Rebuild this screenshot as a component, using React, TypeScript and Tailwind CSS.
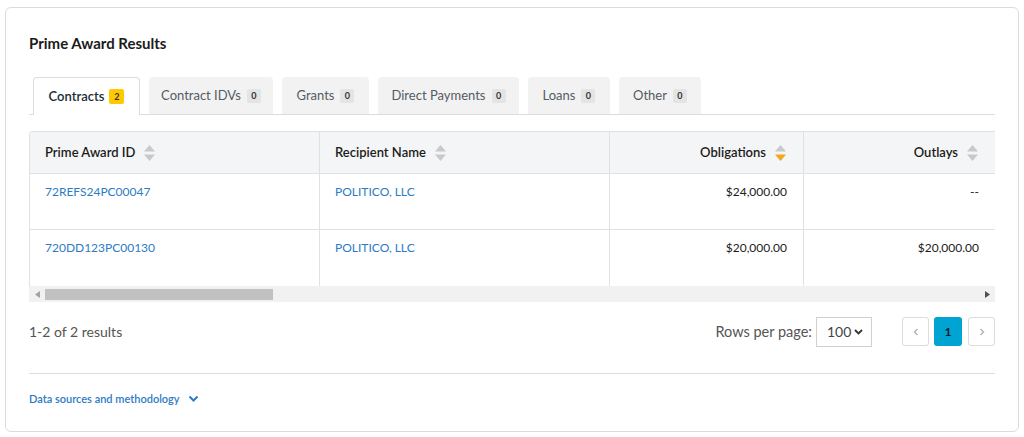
import React from 'react';

const font = { fontFamily: '"Source Sans Pro", Lato, "Liberation Sans", sans-serif' };

const tabs = [
  { label: 'Contracts', count: 2, active: true, w: 'w-[107px]' },
  { label: 'Contract IDVs', count: 0, w: 'w-[124px]' },
  { label: 'Grants', count: 0, w: 'w-[87px]' },
  { label: 'Direct Payments', count: 0, w: 'w-[141px]' },
  { label: 'Loans', count: 0, w: 'w-[82px]' },
  { label: 'Other', count: 0, w: 'w-[82px]' },
];

const rows = [
  { id: '72REFS24PC00047', name: 'POLITICO, LLC', obligations: '$24,000.00', outlays: '--' },
  { id: '720DD123PC00130', name: 'POLITICO, LLC', obligations: '$20,000.00', outlays: '$20,000.00' },
];

const SortIcon = ({ active }: { active?: boolean }) => (
  <svg width="13" height="20" viewBox="0 0 13 20" className="shrink-0">
    <path d="M6.5 2 L12 8.5 H1 Z" fill="#c9c9c9" />
    <path d="M6.5 18 L12 11.5 H1 Z" fill={active ? '#f2a81d' : '#c9c9c9'} />
  </svg>
);

export default function App() {
  return (
    <div className="bg-white px-[5px] pt-[7px] h-[437px]" style={font}>
      <div className="border border-[#dcdcdc] rounded-[6px] px-[23px] pt-[25px] h-[425px]">
        <h2 className="text-[15px] leading-[20px] font-bold text-[#1b1b1b]">Prime Award Results</h2>

        {/* tabs */}
        <div className="mt-[24px] flex gap-[9px] pl-[4px] border-b border-[#dcdcdc] h-[38px]">
          {tabs.map((t) =>
            t.active ? (
              <div
                key={t.label}
                className={`${t.w} h-[38px] flex items-center justify-center gap-[5px] bg-white border border-b-0 border-[#dcdcdc] rounded-t-[4px] text-[13px] font-semibold text-[#1b2b3b]`}
              >
                {t.label}
                <span className="w-[15px] h-[15px] rounded-[2px] bg-[#ffc800] text-[9px] font-bold text-[#333] flex items-center justify-center">
                  {t.count}
                </span>
              </div>
            ) : (
              <div
                key={t.label}
                className={`${t.w} h-[37px] flex items-center justify-center gap-[6px] bg-[#f2f2f2] rounded-t-[4px] text-[13px] text-[#555b63]`}
              >
                {t.label}
                <span className="w-[14px] h-[14px] rounded-[2px] bg-[#e3e4e5] text-[9px] font-bold text-[#333] flex items-center justify-center">
                  {t.count}
                </span>
              </div>
            )
          )}
        </div>

        {/* table */}
        <div className="mt-[16px] border-l border-t border-[#dfe1e2] rounded-tl-[4px] overflow-hidden">
          <div className="flex h-[42px] bg-[#f4f5f6] border-b border-[#dfe1e2] text-[13px] font-semibold text-[#1b1b1b]">
            <div className="w-[290px] shrink-0 border-r border-[#dfe1e2] flex items-center gap-[8px] pl-[15px]">
              Prime Award ID <SortIcon />
            </div>
            <div className="w-[290px] shrink-0 border-r border-[#dfe1e2] flex items-center gap-[8px] pl-[15px]">
              Recipient Name <SortIcon />
            </div>
            <div className="w-[194px] shrink-0 border-r border-[#dfe1e2] flex items-center justify-end gap-[8px] pr-[16px]">
              Obligations <SortIcon active />
            </div>
            <div className="flex-1 flex items-center justify-end gap-[8px] pr-[16px]">
              Outlays <SortIcon />
            </div>
          </div>
          {rows.map((r) => (
            <div key={r.id} className="flex h-[56px] border-b border-[#dfe1e2] text-[12px] last:border-b-0">
              <div className="w-[290px] shrink-0 border-r border-[#dfe1e2] pl-[15px] pt-[9px] text-[#2e7bc4]">{r.id}</div>
              <div className="w-[290px] shrink-0 border-r border-[#dfe1e2] pl-[15px] pt-[9px] text-[#2e7bc4]">{r.name}</div>
              <div className="w-[194px] shrink-0 border-r border-[#dfe1e2] pr-[16px] pt-[9px] text-right text-[#1b1b1b]">
                {r.obligations}
              </div>
              <div className="flex-1 pr-[16px] pt-[9px] text-right text-[#1b1b1b]">{r.outlays}</div>
            </div>
          ))}
        </div>

        {/* fake scrollbar */}
        <div className="h-[16px] bg-[#f1f1f1] flex items-center">
          <div className="w-[16px] flex justify-center">
            <svg width="5" height="7" viewBox="0 0 5 7">
              <path d="M5 0 L0 3.5 L5 7 Z" fill="#a3a3a3" />
            </svg>
          </div>
          <div className="w-[228px] h-[11px] bg-[#c1c1c1]" />
          <div className="flex-1" />
          <div className="w-[16px] flex justify-center">
            <svg width="5" height="7" viewBox="0 0 5 7">
              <path d="M0 0 L5 3.5 L0 7 Z" fill="#505050" />
            </svg>
          </div>
        </div>

        {/* footer */}
        <div className="flex items-center justify-between mt-[15px] h-[29px]" style={{ fontFamily: 'Lato, sans-serif' }}>
          <div className="text-[14px] text-[#555]">1-2 of 2 results</div>
          <div className="flex items-center">
            <span className="text-[14.5px] text-[#555] mr-[4px]">Rows per page:</span>
            <div className="w-[56px] h-[30px] border border-[#d0d0d0] flex items-center justify-between pl-[10px] pr-[8px] text-[14px] text-[#444]">
              100
              <svg width="9" height="6" viewBox="0 0 9 6">
                <path d="M1 1 L4.5 4.5 L8 1" stroke="#333" strokeWidth="1.8" fill="none" />
              </svg>
            </div>
            <div className="flex items-center ml-[30px] gap-[5px]">
              <div className="w-[27px] h-[29px] border border-[#dcdcdc] rounded-[3px] flex items-center justify-center">
                <svg width="6" height="8" viewBox="0 0 6 8">
                  <path d="M4.5 1 L1.5 4 L4.5 7" stroke="#b5b5b5" strokeWidth="1.5" fill="none" />
                </svg>
              </div>
              <div className="w-[28px] h-[29px] bg-[#00a4d3] rounded-[3px] flex items-center justify-center text-[12px] font-bold text-[#0b1b2b]">
                1
              </div>
              <div className="w-[27px] h-[29px] border border-[#dcdcdc] rounded-[3px] flex items-center justify-center ml-[1px]">
                <svg width="6" height="8" viewBox="0 0 6 8">
                  <path d="M1.5 1 L4.5 4 L1.5 7" stroke="#b5b5b5" strokeWidth="1.5" fill="none" />
                </svg>
              </div>
            </div>
          </div>
        </div>

        <div className="mt-[27px] border-t border-[#dcdcdc]" />

        <div className="mt-[17px] flex items-center gap-[8px] text-[11px] font-semibold text-[#2e7bc4]">
          Data sources and methodology
          <svg width="11" height="8" viewBox="0 0 11 8">
            <path d="M1.5 1.5 L5.5 5.5 L9.5 1.5" stroke="#2e7bc4" strokeWidth="2" fill="none" />
          </svg>
        </div>
      </div>
    </div>
  );
}
